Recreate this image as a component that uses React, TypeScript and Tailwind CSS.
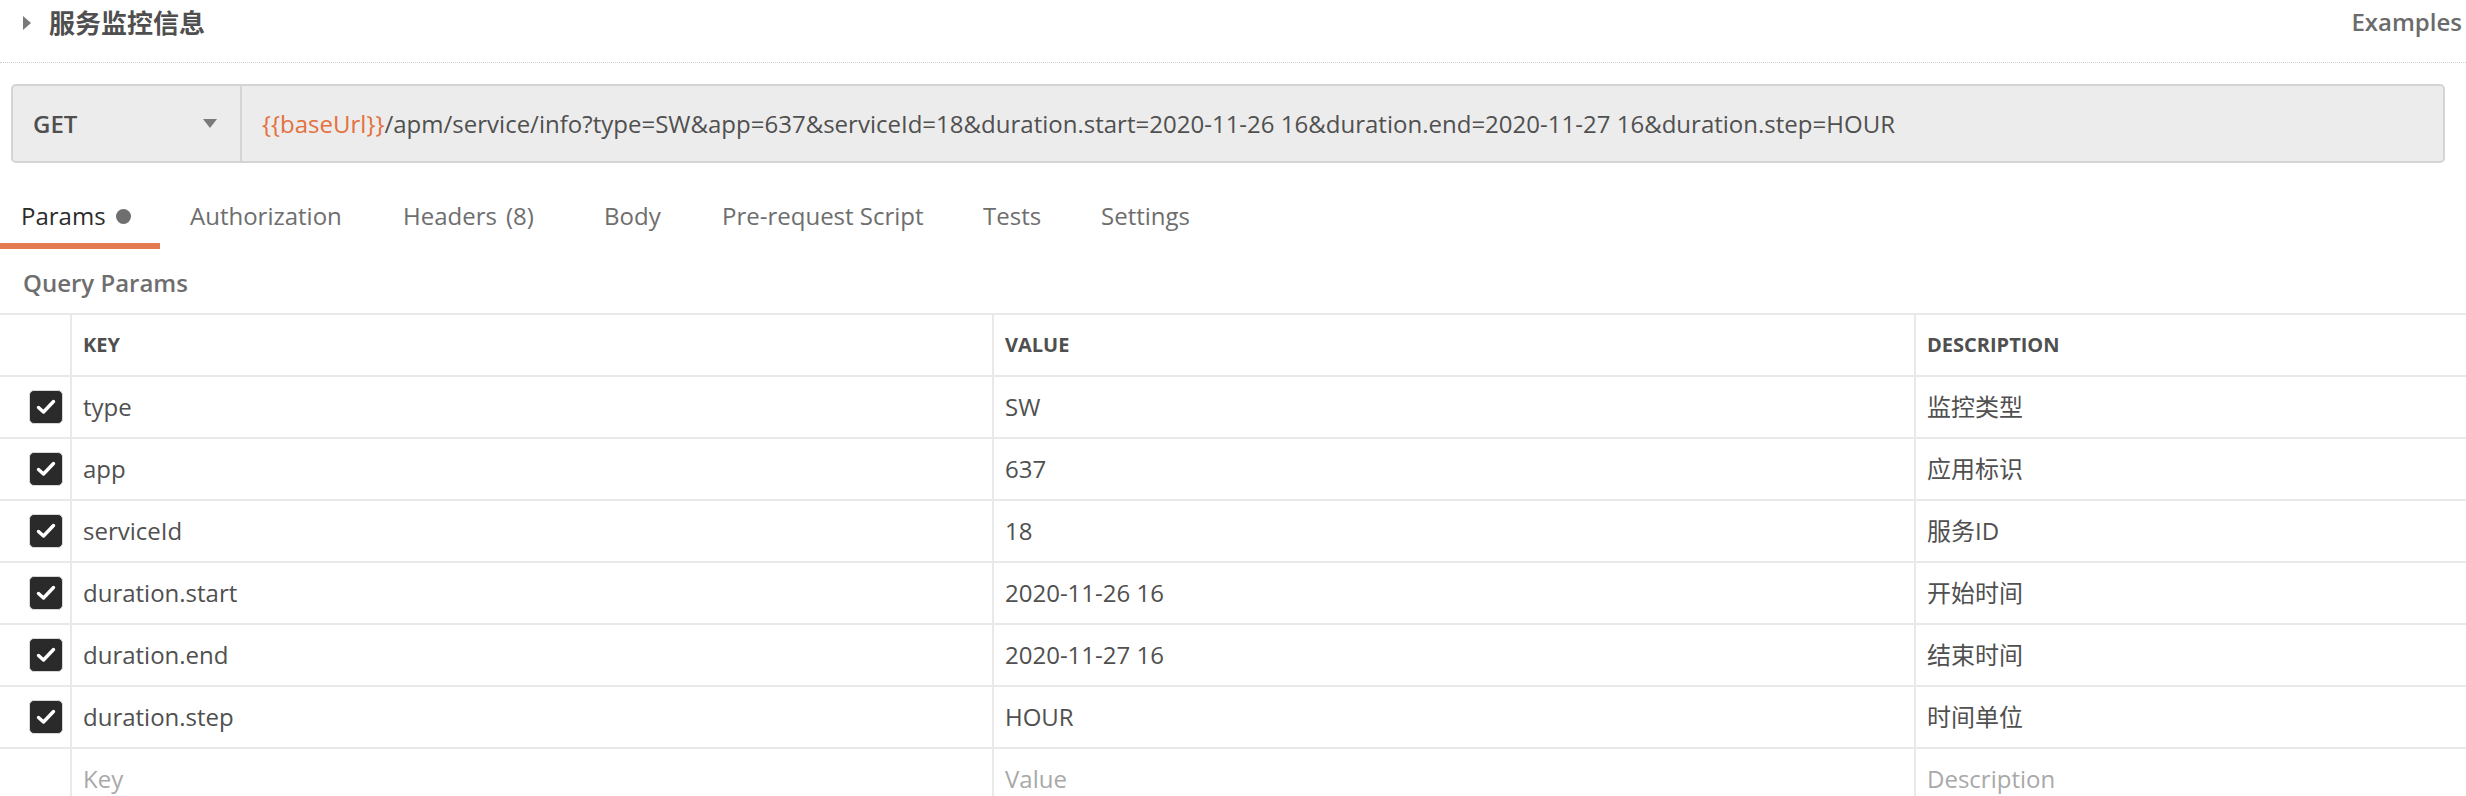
import React from "react";

const PARAM_ROWS = [
  { key: "type", value: "SW", desc: "监控类型" },
  { key: "app", value: "637", desc: "应用标识" },
  { key: "serviceId", value: "18", desc: "服务ID" },
  { key: "duration.start", value: "2020-11-26 16", desc: "开始时间" },
  { key: "duration.end", value: "2020-11-27 16", desc: "结束时间" },
  { key: "duration.step", value: "HOUR", desc: "时间单位" },
] as const;

const TABS = [
  { label: "Params", width: "w-[169px]", active: true },
  { label: "Authorization", width: "w-[213px]", active: false },
  { label: "Headers", count: "(8)", width: "w-[201px]", active: false },
  { label: "Body", width: "w-[118px]", active: false },
  { label: "Pre-request Script", width: "w-[261px]", active: false },
  { label: "Tests", width: "w-[118px]", active: false },
  { label: "Settings", width: "w-[140px]", active: false },
] as const;

function CheckBox() {
  return (
    <div className="ml-[29px] flex h-[34px] w-[34px] items-center justify-center rounded-[5px] border border-[#d8d8d8] bg-[#2a2a2a]">
      <svg width="20" height="16" viewBox="0 0 20 16" fill="none">
        <path
          d="M2.5 8.5 L7.5 13 L17.5 2.5"
          stroke="#ffffff"
          strokeWidth="3.4"
          strokeLinecap="round"
          strokeLinejoin="round"
        />
      </svg>
    </div>
  );
}

function Cell({
  children,
  className = "",
}: {
  children?: React.ReactNode;
  className?: string;
}) {
  return (
    <div
      className={`flex h-[62px] items-center border-t-2 border-l-2 border-[#e9e9e9] pl-[11px] ${className}`}
    >
      {children}
    </div>
  );
}

export default function App() {
  return (
    <div className="h-[796px] w-[2466px] overflow-hidden bg-white font-['Open_Sans','Noto_Sans_CJK_SC',sans-serif] text-[#505050]">
      {/* request title bar */}
      <div className="flex h-[63px] items-start justify-between border-b border-dotted border-[#cfcfcf] pt-[6px] pr-[4px] pl-[22px]">
        <div className="flex items-center">
          <svg width="10" height="16" viewBox="0 0 10 16" className="mt-[1px]">
            <path d="M1 1 L9 8 L1 15 Z" fill="#7a7a7a" />
          </svg>
          <span className="ml-[17px] font-['Noto_Sans_CJK_SC',sans-serif] text-[26px] leading-[32px] font-bold text-[#4f4f4f]">
            服务监控信息
          </span>
        </div>
        <span className="text-[24px] leading-[32px] font-semibold text-[#6b6b6b]">
          Examples
        </span>
      </div>

      {/* url bar */}
      <div className="mt-[21px] ml-[11px] flex h-[79px] w-[2434px] overflow-hidden rounded-[5px] border-2 border-[#d4d4d4] bg-[#ececec]">
        <div className="relative flex w-[229px] items-center border-r-2 border-[#d4d4d4] pl-[20px]">
          <span className="text-[24px] font-semibold text-[#4f4f4f]">GET</span>
          <svg
            width="14"
            height="10"
            viewBox="0 0 14 10"
            className="absolute top-[33px] left-[190px]"
          >
            <path d="M0 0 L14 0 L7 9 Z" fill="#7a7a7a" />
          </svg>
        </div>
        <div className="flex items-center pl-[20px] text-[24px] tracking-[0.01px] whitespace-pre text-[#505050]">
          <span className="text-[#e4703d]">{"{{baseUrl}}"}</span>
          /apm/service/info?type=SW&amp;app=637&amp;serviceId=18&amp;duration.start=2020-11-26
          16&amp;duration.end=2020-11-27 16&amp;duration.step=HOUR
        </div>
      </div>

      {/* tabs */}
      <div className="mt-[37px] flex">
        {TABS.map((tab) => (
          <div key={tab.label} className={`flex flex-col ${tab.width}`}>
            <div
              className={`flex h-[32px] items-center pl-[21px] text-[24px] ${
                tab.active ? "text-[#2b2b2b]" : "text-[#6e6e6e]"
              }`}
            >
              {tab.label}
              {"count" in tab && <span className="ml-[9px]">{tab.count}</span>}
              {tab.active && (
                <span className="ml-[10px] h-[15px] w-[15px] rounded-full bg-[#6f6f6f]" />
              )}
            </div>
            <div
              className={`mt-[11px] h-[6px] w-[160px] ${
                tab.active ? "bg-[#e47a4f]" : "bg-transparent"
              }`}
            />
          </div>
        ))}
      </div>

      {/* query params */}
      <div className="mt-[18px] h-[32px] pl-[23px] text-[24px] leading-[32px] font-semibold text-[#6e6e6e]">
        Query Params
      </div>

      <div className="mt-[14px] grid grid-cols-[70px_922px_922px_1fr]">
        <div className="h-[62px] border-t-2 border-[#e9e9e9]" />
        {["KEY", "VALUE", "DESCRIPTION"].map((h) => (
          <Cell key={h}>
            <span className="text-[20px] font-bold text-[#4f4f4f]">{h}</span>
          </Cell>
        ))}
        {PARAM_ROWS.map((row) => (
          <React.Fragment key={row.key}>
            <div className="flex h-[62px] items-center border-t-2 border-[#e9e9e9]">
              <CheckBox />
            </div>
            <Cell className="text-[24px]">{row.key}</Cell>
            <Cell className="text-[24px]">{row.value}</Cell>
            <Cell className="text-[24px]">{row.desc}</Cell>
          </React.Fragment>
        ))}
        <div className="h-[62px] border-t-2 border-[#e9e9e9]" />
        <Cell className="text-[24px] text-[#a9a9a9]">Key</Cell>
        <Cell className="text-[24px] text-[#a9a9a9]">Value</Cell>
        <Cell className="text-[24px] text-[#a9a9a9]">Description</Cell>
      </div>
    </div>
  );
}
